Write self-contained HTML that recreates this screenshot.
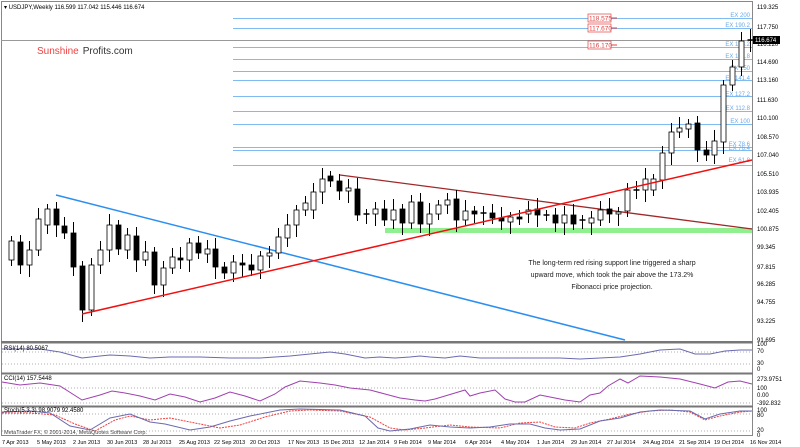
<!DOCTYPE html>
<html><head><meta charset="utf-8"><style>
body{margin:0;width:800px;height:447px;overflow:hidden;background:#fff;font-family:"Liberation Sans",sans-serif}
svg{display:block}
text{font-family:"Liberation Sans",sans-serif}
</style></head><body>
<svg id="s" width="800" height="447" viewBox="0 0 800 447" xmlns="http://www.w3.org/2000/svg">
<rect x="0" y="0" width="800" height="447" fill="#fff"/>
<rect x="1.5" y="1.5" width="751" height="434" fill="none" stroke="#888" stroke-width="1"/>
<line x1="1" y1="40.5" x2="752" y2="40.5" stroke="#999"/>
<rect x="1" y="341" width="752" height="2.5" fill="#777"/>
<rect x="1" y="372.5" width="752" height="2" fill="#777"/>
<rect x="1" y="405.5" width="752" height="2" fill="#777"/>
<text x="4" y="9" font-size="6" fill="#000">▾ USDJPY,Weekly  116.599 117.042 115.446 116.674</text>
<text x="37" y="54" font-size="10"><tspan fill="#f04040">Sunshine</tspan><tspan fill="#333" dx="4">Profits.com</tspan></text>
<g stroke="#7fbaf0" stroke-width="1">
<line x1="233" y1="18.5" x2="752" y2="18.5"/><line x1="233" y1="28.5" x2="752" y2="28.5"/>
<line x1="233" y1="47.5" x2="752" y2="47.5"/><line x1="233" y1="59.5" x2="752" y2="59.5"/>
<line x1="233" y1="71.5" x2="752" y2="71.5"/><line x1="233" y1="80.5" x2="752" y2="80.5"/>
<line x1="233" y1="96.5" x2="752" y2="96.5"/><line x1="233" y1="111.5" x2="752" y2="111.5"/>
<line x1="233" y1="124.5" x2="752" y2="124.5"/><line x1="233" y1="147.5" x2="752" y2="147.5"/>
<line x1="233" y1="150.5" x2="752" y2="150.5"/><line x1="233" y1="165.5" x2="752" y2="165.5"/>
</g>
<g font-size="6" fill="#6aa8e8" text-anchor="end">
<text x="750" y="17">EX 200</text><text x="750" y="27">EX 190.2</text><text x="750" y="46">EX 173.2</text>
<text x="750" y="58">EX 161.8</text><text x="750" y="70">EX 150</text><text x="750" y="80">EX 141.4</text>
<text x="750" y="96">EX 127.2</text><text x="750" y="110">EX 112.8</text><text x="750" y="123">EX 100</text>
<text x="750" y="146">EX 78.6</text><text x="750" y="150">EX 76.4</text><text x="750" y="162">EX 61.8</text>
</g>
<g font-size="6.5" fill="#e04040">
<rect x="588" y="14" width="23" height="8" fill="#fff" stroke="#e04040" stroke-width=".7"/><line x1="611" y1="18" x2="617" y2="18" stroke="#e04040"/><text x="589" y="20.5">118.575</text>
<rect x="588" y="24" width="23" height="8" fill="#fff" stroke="#e04040" stroke-width=".7"/><line x1="611" y1="28" x2="617" y2="28" stroke="#e04040"/><text x="589" y="30.5">117.670</text>
<rect x="588" y="41" width="23" height="8" fill="#fff" stroke="#e04040" stroke-width=".7"/><line x1="611" y1="45" x2="617" y2="45" stroke="#e04040"/><text x="589" y="47.5">116.170</text>
</g>
<rect x="385" y="228" width="367" height="5" fill="#90f090"/>
<line x1="56" y1="195" x2="625" y2="340" stroke="#2b8ff0" stroke-width="1.5"/>
<line x1="340" y1="175" x2="752" y2="229" stroke="#a02828" stroke-width="1.3"/>
<g id="c"></g>
<line x1="82" y1="314" x2="752" y2="160" stroke="#f01010" stroke-width="1.5"/>
<g font-size="7" fill="#222" text-anchor="middle">
<text x="612" y="265">The long-term red rising support line triggered a sharp</text>
<text x="612" y="277">upward move, which took the pair above the 173.2%</text>
<text x="612" y="289">Fibonacci price projection.</text>
</g>
<g font-size="6" fill="#000">
<text x="757" y="9">119.325</text><text x="757" y="29">117.750</text><text x="757" y="46">116.220</text>
<text x="757" y="64">114.690</text><text x="757" y="82">113.160</text><text x="757" y="102">111.630</text>
<text x="757" y="120">110.100</text><text x="757" y="139">108.570</text><text x="757" y="157">107.040</text>
<text x="757" y="176">105.510</text><text x="757" y="194">103.935</text><text x="757" y="213">102.405</text>
<text x="757" y="231">100.875</text><text x="757" y="249">99.345</text><text x="757" y="269">97.815</text>
<text x="757" y="286">96.285</text><text x="757" y="304">94.755</text><text x="757" y="323">93.225</text>
<text x="757" y="342">91.695</text>
<rect x="753" y="36" width="27" height="8" fill="#000"/><text x="755" y="42" fill="#fff">116.674</text>
</g>
<g stroke="#999" stroke-dasharray="1,2" stroke-width=".8"><line x1="2" y1="352" x2="752" y2="352"/><line x1="2" y1="364" x2="752" y2="364"/>
<line x1="2" y1="388" x2="752" y2="388"/><line x1="2" y1="403" x2="752" y2="403"/><line x1="2" y1="414" x2="752" y2="414"/><line x1="2" y1="431" x2="752" y2="431"/></g>
<polyline fill="none" stroke="#6a6ab0" stroke-width="1" points="2,349 40,349 60,352 82,358 100,356 110,355 130,356 150,358 170,357 200,357 230,358 260,358 290,356 310,354 330,352 345,354 365,358 380,357 395,358 410,357 420,356 430,357 445,358 460,356 480,358 500,358 520,358 540,358 560,358 580,359 600,358 620,357 640,354 660,350 680,349 695,354 710,354 725,351 740,350 752,350"/>
<text x="4" y="350" font-size="6">RSI(14) 80.5067</text>
<polyline fill="none" stroke="#a040b0" stroke-width="1" points="2,382 20,385 40,383 60,386 82,400 100,395 112,391 125,393 140,396 155,400 170,394 185,397 200,402 215,398 230,392 245,396 260,401 275,394 285,387 300,381 320,383 335,385 350,388 370,390 385,394 400,398 415,400 425,401 435,399 445,396 455,393 465,390 470,396 480,393 495,390 505,399 515,402 525,402 540,395 550,397 565,400 580,402 590,395 600,393 608,386 620,379 628,383 640,376 660,377 680,379 700,384 715,388 728,382 740,381 752,384"/>
<text x="4" y="380" font-size="6">CCI(14) 157.5448</text>
<polyline fill="none" stroke="#f04040" stroke-width="1" stroke-dasharray="2,1" points="2,413 30,413 55,415 75,424 95,431 115,420 130,416 150,420 170,418 200,424 220,428 240,425 265,417 290,411 310,410 340,411 370,417 390,428 405,430 425,428 450,425 470,427 500,428 520,423 540,422 555,427 575,428 590,423 610,419 630,414 650,411 670,410 690,412 705,420 720,416 740,412 752,411"/>
<polyline fill="none" stroke="#6a6ab0" stroke-width="1" points="2,412 30,411 50,413 70,426 90,430 110,418 130,414 150,422 165,424 190,430 210,427 230,421 250,416 280,410 300,409 340,410 365,416 378,428 390,431 410,429 430,425 450,427 470,428 490,427 510,424 530,424 545,428 560,430 580,429 600,421 620,418 640,412 660,410 690,411 705,419 720,414 740,411 752,411"/>
<text x="4" y="412" font-size="6">Stoch(5,3,3) 98.9079 92.4580</text>
<text x="4" y="434" font-size="5.5" fill="#444">MetaTrader FX, © 2001-2014, MetaQuotes Software Corp.</text>
<g font-size="6" fill="#000">
<text x="757" y="346">100</text><text x="757" y="353">70</text><text x="757" y="365">30</text><text x="757" y="371">0</text>
<text x="757" y="381">273.9751</text><text x="757" y="390">100</text><text x="757" y="397">0.00</text><text x="757" y="405">-392.832</text>
<text x="757" y="412">100</text><text x="757" y="417">80</text><text x="757" y="432">20</text><text x="757" y="437">0</text>
</g>
<g font-size="5.5" fill="#000">
<text x="2" y="444">7 Apr 2013</text><text x="37" y="444">5 May 2013</text><text x="73" y="444">2 Jun 2013</text><text x="107" y="444">30 Jun 2013</text><text x="143" y="444">28 Jul 2013</text><text x="179" y="444">25 Aug 2013</text><text x="214" y="444">22 Sep 2013</text><text x="250" y="444">20 Oct 2013</text><text x="288" y="444">17 Nov 2013</text><text x="323" y="444">15 Dec 2013</text><text x="359" y="444">12 Jan 2014</text><text x="394" y="444">9 Feb 2014</text><text x="428" y="444">9 Mar 2014</text><text x="465" y="444">6 Apr 2014</text><text x="501" y="444">4 May 2014</text><text x="537" y="444">1 Jun 2014</text><text x="571" y="444">29 Jun 2014</text><text x="607" y="444">27 Jul 2014</text><text x="643" y="444">24 Aug 2014</text><text x="679" y="444">21 Sep 2014</text><text x="714" y="444">19 Oct 2014</text><text x="750" y="444">16 Nov 2014</text>
</g>
</svg>
<script>
var d=[[11,241,260,1],[20,242,265,0],[29,250,265,1],[38,219,250,1],[47,209,225,1],[56,209,225,0],[64,226,233,0],[73,233,267,0],[82,266,310,0],[91,265,310,1],[100,250,265,1],[109,225,250,1],[118,225,249,0],[127,235,250,1],[136,236,260,0],[145,252,260,1],[154,252,285,0],[163,268,285,1],[172,257,268,1],[180,258,260,0],[189,243,260,1],[198,243,253,0],[207,249,254,1],[215,249,267,0],[224,267,273,0],[233,262,273,1],[242,263,265,0],[251,265,270,0],[260,256,270,1],[269,253,256,1],[278,237,253,1],[287,225,238,1],[296,210,225,1],[305,203,210,1],[313,192,210,1],[322,179,192,1],[330,176,181,0],[339,181,191,0],[348,188,191,1],[357,189,215,0],[366,214,215,1],[375,209,214,1],[384,209,220,0],[393,210,220,1],[402,209,223,0],[411,202,223,1],[420,202,224,0],[429,214,224,1],[438,205,214,1],[447,200,205,1],[456,199,220,0],[465,211,220,1],[474,211,214,0],[483,213,213,1],[492,213,218,0],[501,218,221,0],[510,217,222,1],[519,217,219,0],[528,210,214,1],[537,209,215,0],[546,215,215,1],[555,215,223,0],[564,215,223,1],[573,215,224,0],[582,220,220,1],[591,218,223,1],[600,210,220,1],[609,209,214,0],[618,212,214,1],[627,190,211,1],[636,190,190,1],[645,179,190,1],[653,179,190,1],[662,153,180,1],[671,132,153,1],[679,128,132,1],[688,124,129,1],[697,123,150,0],[706,150,155,0],[714,141,155,1],[723,85,142,1],[732,67,85,1],[741,41,67,1],[750,40,40,1]];
var h='';d.forEach(function(c,i){var x=c[0]+.5,t=c[1],b=c[2],lo=b+6+(i%3)*3,hi=t-5-(i%4)*2;
h+='<line x1="'+x+'" y1="'+hi+'" x2="'+x+'" y2="'+lo+'" stroke="#000" stroke-width="1"/>';
if(b-t<1.5)h+='<line x1="'+(x-3)+'" y1="'+t+'" x2="'+(x+3)+'" y2="'+t+'" stroke="#000" stroke-width="1.5"/>';
else h+='<rect x="'+(x-2.5)+'" y="'+t+'" width="5" height="'+(b-t)+'" fill="'+(c[3]?'#fff':'#000')+'" stroke="#000" stroke-width=".8"/>';});
document.getElementById('c').innerHTML=h;
</script>
</body></html>
